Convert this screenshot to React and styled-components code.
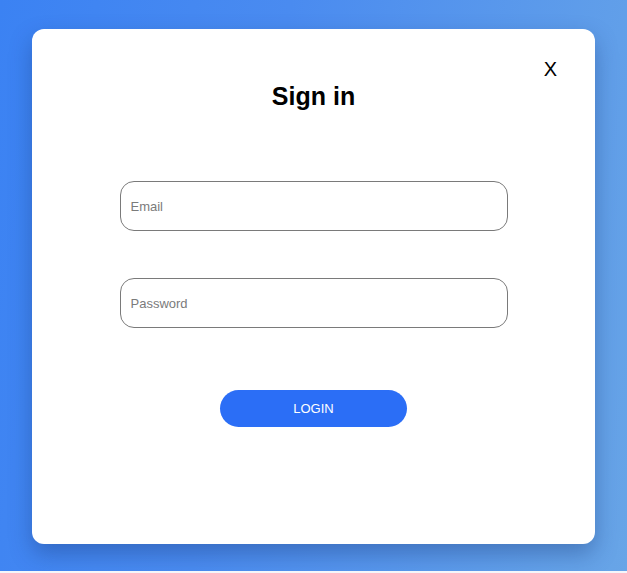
import React from 'react';
import styled, { createGlobalStyle } from 'styled-components';

const GlobalStyle = createGlobalStyle`
  * {
    box-sizing: border-box;
  }

  body {
    margin: 0;
    background: #f4f6fa;
    font-family: 'Liberation Sans', Arial, sans-serif;
  }
`;

const App = () => {
  return (
    <>
      <GlobalStyle />
      <Backdrop>
        <Modal>
          <CloseButton type='button' aria-label='close'>
            X
          </CloseButton>
          <Title>Sign in</Title>
          <Form onSubmit={(e) => e.preventDefault()}>
            <Field type='email' placeholder='Email' />
            <Field type='password' placeholder='Password' />
            <LoginButton type='submit'>LOGIN</LoginButton>
          </Form>
        </Modal>
      </Backdrop>
    </>
  );
};

export default App;

const Backdrop = styled.div`
  display: flex;
  align-items: center;
  justify-content: center;
  width: 100%;
  height: 571px;
  padding-top: 2px;
  background: linear-gradient(100deg, #3b82f3 0%, #4a8bf0 40%, #68a5e7 100%);
`;

const Modal = styled.div`
  position: relative;
  display: flex;
  flex-direction: column;
  align-items: center;
  width: 563px;
  height: 515px;
  padding-top: 52px;
  background-color: #fff;
  border-radius: 12px;
  box-shadow: 0 10px 22px rgba(20, 50, 110, 0.35);
`;

const CloseButton = styled.button`
  position: absolute;
  top: 28px;
  right: 38px;
  padding: 0;
  border: none;
  background: none;
  font-family: 'Liberation Sans', Arial, sans-serif;
  font-size: 20px;
  line-height: 24px;
  color: #000;
  cursor: pointer;
`;

const Title = styled.h1`
  margin: 0;
  font-size: 25px;
  line-height: 30px;
  font-weight: 700;
  color: #000;
`;

const Form = styled.form`
  display: flex;
  flex-direction: column;
  align-items: center;
  margin-top: 70px;
`;

const Field = styled.input`
  width: 388px;
  height: 50px;
  padding: 0 10px;
  margin-bottom: 47px;
  border: 1px solid #7a7a7a;
  border-radius: 14px;
  font-family: 'Liberation Sans', Arial, sans-serif;
  font-size: 13px;
  color: #222;
  outline: none;

  &::placeholder {
    color: #7b7b7b;
  }

  &:last-of-type {
    margin-bottom: 62px;
  }
`;

const LoginButton = styled.button`
  width: 187px;
  height: 37px;
  border: none;
  border-radius: 19px;
  background-color: #2b6ef6;
  color: #fff;
  font-family: 'Liberation Sans', Arial, sans-serif;
  font-size: 13px;
  cursor: pointer;
`;
